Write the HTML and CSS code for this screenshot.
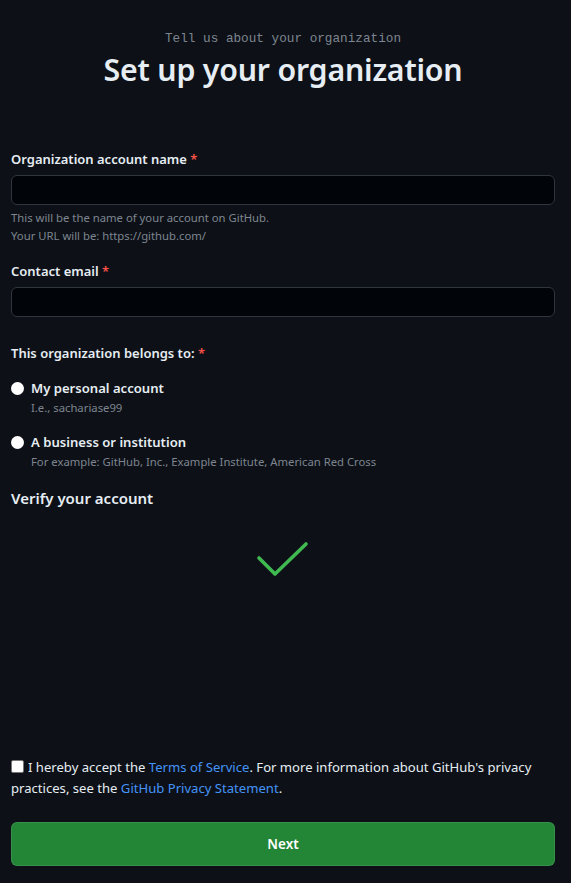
FILE: index.html
```html
<!DOCTYPE html>
<html lang="en">
<head>
<meta charset="utf-8">
<title>Set up your organization</title>
<link rel="stylesheet" href="styles.css">
</head>
<body>
<main class="page">
  <header class="head">
    <p class="eyebrow">Tell us about your organization</p>
    <h1 class="title">Set up your organization</h1>
  </header>

  <form class="form">
    <div class="field field-name">
      <label class="label">Organization account name <span class="req">*</span></label>
      <input class="input" type="text">
      <p class="note">This will be the name of your account on GitHub.<br>Your URL will be: https://github.com/</p>
    </div>

    <div class="field field-email">
      <label class="label">Contact email <span class="req">*</span></label>
      <input class="input" type="email">
    </div>

    <div class="field group">
      <p class="label">This organization belongs to: <span class="req">*</span></p>
      <div class="radio">
        <span class="dot"></span>
        <div>
          <div class="radio-title">My personal account</div>
          <div class="note">I.e., sachariase99</div>
        </div>
      </div>
      <div class="radio">
        <span class="dot"></span>
        <div>
          <div class="radio-title">A business or institution</div>
          <div class="note">For example: GitHub, Inc., Example Institute, American Red Cross</div>
        </div>
      </div>
    </div>

    <section class="verify">
      <h2 class="verify-title">Verify your account</h2>
      <div class="check">
        <svg width="56" height="36" viewBox="0 0 56 36" fill="none">
          <path d="M4 17 L20 33 L51 3" stroke="#3fb950" stroke-width="3.6" stroke-linecap="round" stroke-linejoin="round"/>
        </svg>
      </div>
    </section>

    <div class="terms">
      <span class="box"></span>I hereby accept the <a href="#">Terms of Service</a>. For more information about GitHub's privacy practices, see the <a href="#">GitHub Privacy Statement</a>.
    </div>

    <button class="btn" type="button">Next</button>
  </form>
</main>
</body>
</html>
```

FILE: styles.css
```css
* { box-sizing: border-box; }
html, body { margin: 0; padding: 0; background: #0d1117; }
body {
  color: #e6edf3;
  font-family: "Noto Sans", "Open Sans", sans-serif;
  font-size: 14px;
}
.page {
  padding: 30px 16px 16px 11px;
}
.head { text-align: center; }
.eyebrow {
  margin: 0;
  font-family: "Liberation Mono", monospace;
  font-size: 12.7px;
  line-height: 18px;
  color: #7d8590;
}
.title {
  margin: 0;
  font-size: 30.3px;
  font-weight: 600;
  line-height: 44px;
  letter-spacing: -0.2px;
}
.form { margin-top: 57px; display: flex; flex-direction: column; }
.field { display: flex; flex-direction: column; }
.field-name { margin-bottom: 16px; }
.field-email { margin-bottom: 26px; }
.label {
  margin: 0 0 6px;
  font-weight: 600;
  font-size: 13px;
  line-height: 20px;
}
.req { color: #f85149; }
.input {
  height: 30px;
  background: #010409;
  border: 1px solid #30363d;
  border-radius: 6px;
  width: 100%;
  color: #e6edf3;
}
.note {
  margin: 4px 0 0;
  font-size: 11.3px;
  line-height: 18px;
  color: #7d8590;
}
.group { margin-bottom: 15px; }
.group .label { margin-bottom: 15px; }
.radio { display: flex; gap: 7px; margin-bottom: 15px; align-items: flex-start; }
.radio:last-child { margin-bottom: 0; }
.dot {
  width: 13px; height: 13px; border-radius: 50%;
  background: #fff; margin-top: 4px; flex: none;
}
.radio-title { font-weight: 600; font-size: 13.1px; line-height: 20px; }
.radio .note { margin-top: 1px; }
.verify-title { margin: 0; font-size: 15px; font-weight: 600; line-height: 24px; }
.check { display: flex; justify-content: center; align-items: flex-start; height: 247px; padding-top: 31px; }
.terms {
  font-size: 13.1px;
  line-height: 21px;
}
.box {
  display: inline-block;
  width: 13px; height: 13px;
  background: #fff;
  border: 1px solid #767676;
  border-radius: 2px;
  vertical-align: -1px;
  margin-right: 4px;
}
.terms a { color: #4493f8; text-decoration: none; }
.btn {
  margin-top: 23px;
  height: 44px;
  width: 100%;
  background: #238636;
  border: 1px solid rgba(240,246,252,0.1);
  border-radius: 6px;
  color: #fff;
  font-family: inherit;
  font-weight: 600;
  font-size: 13.5px;
}
```
